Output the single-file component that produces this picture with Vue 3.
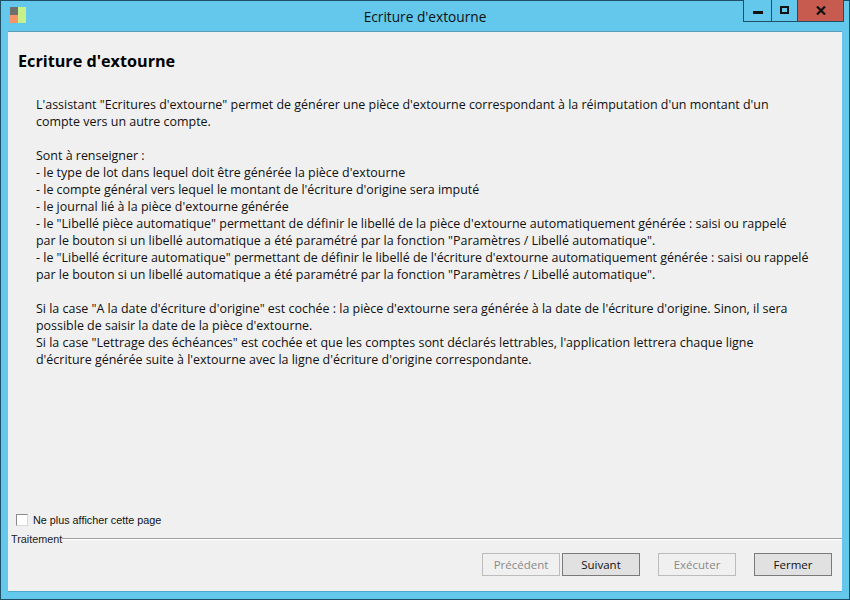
<script setup>
const paragraphs = [
  [
    "L'assistant \"Ecritures d'extourne\" permet de générer une pièce d'extourne correspondant à la réimputation d'un montant d'un",
    "compte vers un autre compte.",
  ],
  [
    "Sont à renseigner :",
    "- le type de lot dans lequel doit être générée la pièce d'extourne",
    "- le compte général vers lequel le montant de l'écriture d'origine sera imputé",
    "- le journal lié à la pièce d'extourne générée",
    "- le \"Libellé pièce automatique\" permettant de définir le libellé de la pièce d'extourne automatiquement générée : saisi ou rappelé",
    "par le bouton si un libellé automatique a été paramétré par la fonction \"Paramètres / Libellé automatique\".",
    "- le \"Libellé écriture automatique\" permettant de définir le libellé de l'écriture d'extourne automatiquement générée : saisi ou rappelé",
    "par le bouton si un libellé automatique a été paramétré par la fonction \"Paramètres / Libellé automatique\".",
  ],
  [
    "Si la case \"A la date d'écriture d'origine\" est cochée : la pièce d'extourne sera générée à la date de l'écriture d'origine. Sinon, il sera",
    "possible de saisir la date de la pièce d'extourne.",
    "Si la case \"Lettrage des échéances\" est cochée et que les comptes sont déclarés lettrables, l'application lettrera chaque ligne",
    "d'écriture générée suite à l'extourne avec la ligne d'écriture d'origine correspondante.",
  ],
];
</script>

<template>
  <div class="window">
    <header class="titlebar">
      <div class="app-icon">
        <span class="sq grey"></span>
        <span class="sq green"></span>
        <span class="sq orange"></span>
      </div>
      <div class="title">Ecriture d'extourne</div>
      <div class="controls">
        <button class="ctl min"><span class="min-glyph"></span></button>
        <button class="ctl max"><span class="max-glyph"></span></button>
        <button class="ctl close">
          <svg width="10" height="9" viewBox="0 0 10 9">
            <path d="M1 0.5 L9 8.5 M9 0.5 L1 8.5" stroke="#111" stroke-width="2.2" fill="none" />
          </svg>
        </button>
      </div>
    </header>

    <main class="client">
      <h1 class="heading">Ecriture d'extourne</h1>
      <div class="help">
        <p v-for="(lines, i) in paragraphs" :key="i">
          <span v-for="line in lines" :key="line" class="line">{{ line }}</span>
        </p>
      </div>

      <label class="no-show">
        <span class="check"></span>
        <span>Ne plus afficher cette page</span>
      </label>

      <div class="group-title">
        <span>Traitement</span>
        <span class="rule"></span>
      </div>

      <div class="actions">
        <button class="btn" disabled>Précédent</button>
        <button class="btn next">Suivant</button>
        <button class="btn run" disabled>Exécuter</button>
        <button class="btn end">Fermer</button>
      </div>
    </main>
  </div>
</template>

<style>
html, body {
  margin: 0;
  background: #63c8ec;
}
</style>

<style scoped>
.window {
  box-sizing: border-box;
  width: 850px;
  height: 600px;
  display: flex;
  flex-direction: column;
  background: #63c8ec;
  border: 1px solid #1d4f66;
  padding: 0 7px 7px;
}

.titlebar {
  height: 30px;
  flex: none;
  position: relative;
  display: flex;
  align-items: center;
  justify-content: center;
}

.app-icon {
  position: absolute;
  left: 2px;
  top: 6px;
  width: 16px;
  height: 16px;
}

.sq {
  position: absolute;
}

.grey {
  left: 0;
  top: 0;
  width: 8px;
  height: 8px;
  background: #6f6f6f;
}

.green {
  left: 8px;
  top: 0;
  width: 8px;
  height: 16px;
  background: #c5f08a;
}

.orange {
  left: 0;
  top: 8px;
  width: 8px;
  height: 8px;
  background: #f79468;
}

.title {
  font-family: "Open Sans", sans-serif;
  font-size: 13.7px;
  color: #111;
}

.controls {
  position: absolute;
  right: -2px;
  top: -1px;
  display: flex;
  height: 21px;
  border: 1px solid #1d4f66;
  border-top: none;
  background: #63c8ec;
}

.ctl {
  padding: 0;
  border: none;
  background: transparent;
  display: flex;
  align-items: center;
  justify-content: center;
}

.min {
  width: 28px;
  border-right: 1px solid #1d4f66;
}

.max {
  width: 26px;
  border-right: 1px solid #1d4f66;
}

.close {
  width: 45px;
  background: #c75b4f;
}

.min-glyph {
  width: 10px;
  height: 3px;
  background: #111;
  margin-top: 4px;
}

.max-glyph {
  box-sizing: border-box;
  width: 9px;
  height: 8px;
  border: 2px solid #111;
  margin-top: -2px;
}

.client {
  flex: 1;
  display: flex;
  flex-direction: column;
  background: #f0f0f0;
  border-top: 1px solid #5a9cb8;
  border-bottom: 1px solid #4fa9cc;
  min-height: 0;
}

.heading {
  margin: 19px 0 0 10px;
  font-family: "Open Sans", sans-serif;
  font-size: 16.2px;
  line-height: 20px;
  font-weight: 700;
  color: #000;
}

.help {
  margin: 25px 0 0 28px;
  font-family: "Open Sans", sans-serif;
  font-size: 12.46px;
  line-height: 17px;
  color: #111;
  flex: 1;
}

.help p {
  margin: 0 0 17px;
}

.line {
  display: block;
  white-space: nowrap;
}

.no-show {
  display: flex;
  align-items: center;
  gap: 5px;
  margin-left: 8px;
  height: 14px;
  font-family: "Liberation Sans", sans-serif;
  font-size: 10.8px;
  color: #111;
}

.check {
  box-sizing: border-box;
  width: 12px;
  height: 12px;
  background: #fff;
  border: 1px solid #8a8a8a;
  border-right-color: #d8d8d8;
  border-bottom-color: #d8d8d8;
}

.group-title {
  display: flex;
  align-items: center;
  margin: 5px 0 0 3px;
  height: 14px;
  font-family: "Liberation Sans", sans-serif;
  font-size: 10.8px;
  color: #222;
}

.rule {
  flex: 1;
  height: 1px;
  background: #a0a0a0;
  border-bottom: 1px solid #fff;
}

.actions {
  display: flex;
  justify-content: flex-end;
  gap: 2px;
  padding: 7px 10px 15px 0;
}

.btn {
  box-sizing: border-box;
  width: 78px;
  height: 23px;
  padding: 0;
  font-family: "Open Sans", sans-serif;
  font-size: 11.5px;
  color: #111;
  background: #e1e1e1;
  border: 1px solid #7a7a7a;
}

.btn:disabled {
  color: #8a8a8a;
  background: #f0f0f0;
  border-color: #bcbcbc;
}

.run,
.end {
  margin-left: 16px;
}
</style>
